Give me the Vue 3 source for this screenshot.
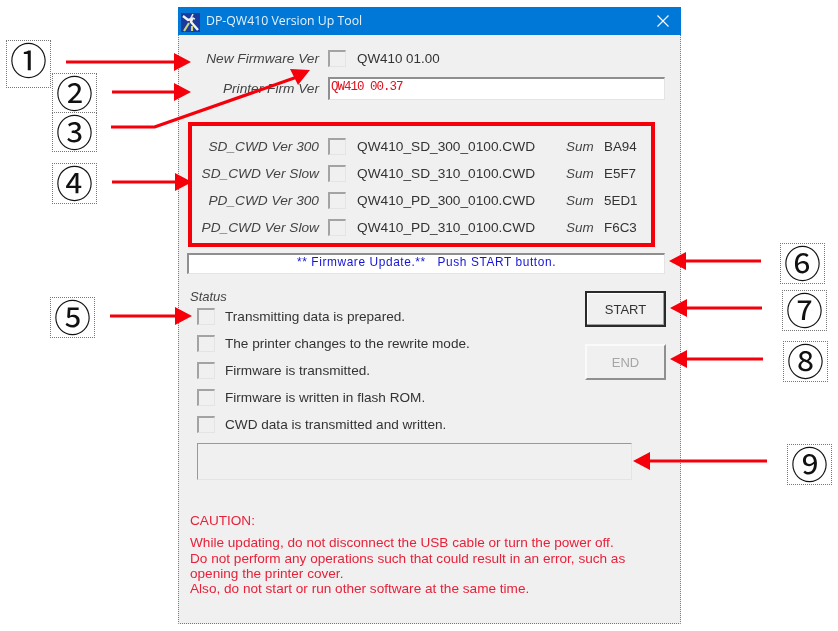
<script setup>
const versions = [
  { label: 'SD_CWD Ver 300', file: 'QW410_SD_300_0100.CWD', sum: 'BA94' },
  { label: 'SD_CWD Ver Slow', file: 'QW410_SD_310_0100.CWD', sum: 'E5F7' },
  { label: 'PD_CWD Ver 300', file: 'QW410_PD_300_0100.CWD', sum: '5ED1' },
  { label: 'PD_CWD Ver Slow', file: 'QW410_PD_310_0100.CWD', sum: 'F6C3' },
]

const steps = [
  'Transmitting data is prepared.',
  'The printer changes to the rewrite mode.',
  'Firmware is transmitted.',
  'Firmware is written in flash ROM.',
  'CWD data is transmitted and written.',
]

// callout numbers sit on the page around the window
const callouts = [
  { n: '①', x: 6, y: 40, h: 48 },
  { n: '②', x: 52, y: 73, h: 40 },
  { n: '③', x: 52, y: 112, h: 40 },
  { n: '④', x: 52, y: 163, h: 41 },
  { n: '⑤', x: 50, y: 297, h: 41 },
  { n: '⑥', x: 780, y: 243, h: 41 },
  { n: '⑦', x: 782, y: 290, h: 41 },
  { n: '⑧', x: 783, y: 341, h: 41 },
  { n: '⑨', x: 787, y: 444, h: 41 },
]

const rightArrows = [
  { y: 62, from: 66, to: 191 },
  { y: 92, from: 112, to: 191 },
  { y: 182, from: 112, to: 192 },
  { y: 316, from: 110, to: 192 },
]
const leftArrows = [
  { y: 261, from: 761, to: 669 },
  { y: 308, from: 762, to: 670 },
  { y: 359, from: 763, to: 670 },
  { y: 461, from: 767, to: 633 },
]
</script>

<template>
  <div class="page">
    <div class="window">
      <div class="titlebar">
        <svg class="app-icon" width="19" height="19" viewBox="0 0 19 19">
          <rect width="19" height="19" fill="#1b3a9c" />
          <path d="M2 3 L7 7 L11 6 L10 9 L17 17" fill="none" stroke="#f4f4ee" stroke-width="2.4" />
          <path d="M3 18 L8 10 M11 18 L11 13" fill="none" stroke="#c9d67a" stroke-width="2.2" />
          <path d="M12 1 L10 5 L14 6" fill="none" stroke="#e8e8e8" stroke-width="1.6" />
        </svg>
        <span class="title">DP-QW410 Version Up Tool</span>
        <svg class="close" width="12" height="12" viewBox="0 0 12 12">
          <path d="M0.5 0.5 L11.5 11.5 M11.5 0.5 L0.5 11.5" stroke="#fff" stroke-width="1.1" fill="none" />
        </svg>
      </div>

      <div class="body">
        <div class="row first">
          <span class="label">New Firmware Ver</span>
          <span class="check"></span>
          <span class="value">QW410 01.00</span>
        </div>
        <div class="row second">
          <span class="label printer">Printer Firm Ver</span>
          <div class="field version">QW410 00.37</div>
        </div>

        <div class="version-box">
          <div v-for="v in versions" :key="v.file" class="row ver">
            <span class="label">{{ v.label }}</span>
            <span class="check"></span>
            <span class="value file">{{ v.file }}</span>
            <span class="sum">Sum</span>
            <span class="value">{{ v.sum }}</span>
          </div>
        </div>

        <div class="field message">** Firmware Update.** &nbsp; Push START button.</div>

        <div class="status-area">
          <div class="status">
            <div class="status-title">Status</div>
            <div v-for="s in steps" :key="s" class="step">
              <span class="check"></span>
              <span class="value">{{ s }}</span>
            </div>
            <div class="progress"></div>
          </div>
          <div class="buttons">
            <button class="btn start">START</button>
            <button class="btn end">END</button>
          </div>
        </div>

        <div class="caution">
          <p class="caution-head">CAUTION:</p>
          <p class="caution-first">While updating, do not disconnect the USB cable or turn the power off.</p>
          <p>Do not perform any operations such that could result in an error, such as</p>
          <p>opening the printer cover.</p>
          <p>Also, do not start or run other software at the same time.</p>
        </div>
      </div>
    </div>

    <div
      v-for="c in callouts"
      :key="c.n"
      class="callout"
      :style="{ left: c.x + 'px', top: c.y + 'px', height: c.h + 'px' }"
    >{{ c.n }}</div>

    <svg class="arrows" width="838" height="631" viewBox="0 0 838 631">
      <g fill="#f5000a" stroke="none">
        <g v-for="a in rightArrows" :key="a.y">
          <rect :x="a.from" :y="a.y - 1.5" :width="a.to - a.from - 10" height="3" />
          <path :d="`M${a.to} ${a.y} L${a.to - 17} ${a.y - 9} L${a.to - 17} ${a.y + 9} Z`" />
        </g>
        <g v-for="a in leftArrows" :key="a.y">
          <rect :x="a.to + 10" :y="a.y - 1.5" :width="a.from - a.to - 10" height="3" />
          <path :d="`M${a.to} ${a.y} L${a.to + 17} ${a.y - 9} L${a.to + 17} ${a.y + 9} Z`" />
        </g>
        <path d="M111 125.5 L154 125.5 L298 75 L299 78 L155 128.5 L111 128.5 Z" />
        <path d="M310 70 L290 69 L298 85 Z" />
      </g>
    </svg>
  </div>
</template>

<style scoped>
.page {
  position: relative;
  width: 838px;
  height: 631px;
  padding: 7px 0 0 178px;
  box-sizing: border-box;
  background: #fff;
  font-family: "Liberation Sans", Arial, sans-serif;
  font-size: 13.4px;
  color: #333;
  overflow: hidden;
  filter: blur(0.35px);
}

.window {
  width: 503px;
  height: 617px;
  box-sizing: border-box;
  border: 1px dotted #3b8fd8;
  border-bottom-color: #777;
  background: #f0f0f0;
  display: flex;
  flex-direction: column;
}

.titlebar {
  height: 28px;
  flex: none;
  background: #0078d7;
  display: flex;
  align-items: center;
  padding: 0 12px 0 3px;
  margin: -1px -1px 0;
}

.app-icon {
  margin-top: 3px;
}

.title {
  margin-left: 6px;
  margin-bottom: 2px;
  flex: 1;
  color: #e6f2fb;
  font-family: "Open Sans", sans-serif;
  font-size: 12.3px;
}

.body {
  flex: 1;
  padding: 0 0 0 8px;
}

.row {
  display: flex;
  align-items: center;
}

.first {
  margin-top: 15px;
  height: 16px;
}

.second {
  margin-top: 11px;
  height: 23px;
}

.label {
  width: 132px;
  margin-right: 9px;
  text-align: right;
  font-style: italic;
  font-size: 13.7px;
  color: #444;
  flex: none;
  white-space: nowrap;
}

.check {
  width: 18px;
  height: 17px;
  flex: none;
  box-sizing: border-box;
  border-top: 2px solid #a3a3a3;
  border-left: 2px solid #a3a3a3;
  border-right: 1px solid #e4e4e4;
  border-bottom: 1px solid #e4e4e4;
}

.value {
  color: #333;
  white-space: nowrap;
}

.row .check + .value {
  margin-left: 11px;
}

.field {
  box-sizing: border-box;
  background: #fff;
  border-top: 2px solid #8f8f8f;
  border-left: 2px solid #8f8f8f;
  border-right: 1px solid #e4e4e4;
  border-bottom: 1px solid #e4e4e4;
}

.version {
  width: 337px;
  height: 23px;
  padding-left: 1px;
  line-height: 17px;
  color: #e0101c;
  font-family: "Liberation Mono", monospace;
  font-size: 12.5px;
  letter-spacing: -1px;
}

.version-box {
  width: 467px;
  height: 125px;
  box-sizing: border-box;
  margin: 22px 0 0 1px;
  border: 4px solid #f5000a;
  padding-top: 7px;
}

.ver {
  height: 27px;
  margin-left: -5px;
}

.file {
  width: 209px;
  font-size: 13.7px;
}

.sum {
  width: 38px;
  font-style: italic;
  color: #444;
}

.message {
  width: 478px;
  height: 21px;
  margin-top: 6px;
  text-align: center;
  line-height: 14px;
  color: #1414d8;
  font-size: 11.9px;
  letter-spacing: 0.6px;
}

.status-area {
  display: flex;
}

.status {
  width: 398px;
  flex: none;
  padding-top: 15px;
}

.status-title {
  font-style: italic;
  font-size: 13px;
  color: #444;
  margin-left: 3px;
  height: 14px;
}

.step {
  height: 27px;
  display: flex;
  align-items: center;
  margin-left: 10px;
}

.step .value {
  margin-left: 10px;
  font-size: 13.6px;
}

.progress {
  width: 435px;
  height: 37px;
  box-sizing: border-box;
  margin: 5px 0 0 10px;
  border-top: 1px solid #999;
  border-left: 1px solid #999;
  border-right: 1px solid #e4e4e4;
  border-bottom: 1px solid #e4e4e4;
}

.buttons {
  display: flex;
  flex-direction: column;
  gap: 17px;
  margin-top: 17px;
}

.btn {
  width: 81px;
  height: 36px;
  box-sizing: border-box;
  margin: 0;
  padding: 0;
  background: #f0f0f0;
  font-family: "Liberation Sans", Arial, sans-serif;
  font-size: 13px;
}

.start {
  border: 2px solid #2a2a2a;
  color: #333;
  box-shadow: inset -1px -1px 0 #a0a0a0, inset 1px 1px 0 #fff;
}

.end {
  border-top: 2px solid #fafafa;
  border-left: 2px solid #fafafa;
  border-right: 2px solid #8f8f8f;
  border-bottom: 2px solid #8f8f8f;
  color: #a6a6a6;
}

.caution {
  margin: 33px 0 0 3px;
  color: #e8213a;
  font-size: 13.6px;
  line-height: 15px;
}

.caution p {
  margin: 0;
  white-space: nowrap;
}

.caution .caution-head {
  margin-bottom: 7px;
}

.caution .caution-first {
  margin-bottom: 1px;
}

.callout {
  position: absolute;
  width: 45px;
  box-sizing: border-box;
  border: 1px dotted #777;
  background: #fff;
  color: #111;
  font-family: "Noto Sans CJK JP", "DejaVu Sans", sans-serif;
  font-size: 37px;
  line-height: 36px;
  display: flex;
  align-items: flex-start;
  justify-content: center;
}

.arrows {
  position: absolute;
  left: 0;
  top: 0;
  pointer-events: none;
}
</style>
